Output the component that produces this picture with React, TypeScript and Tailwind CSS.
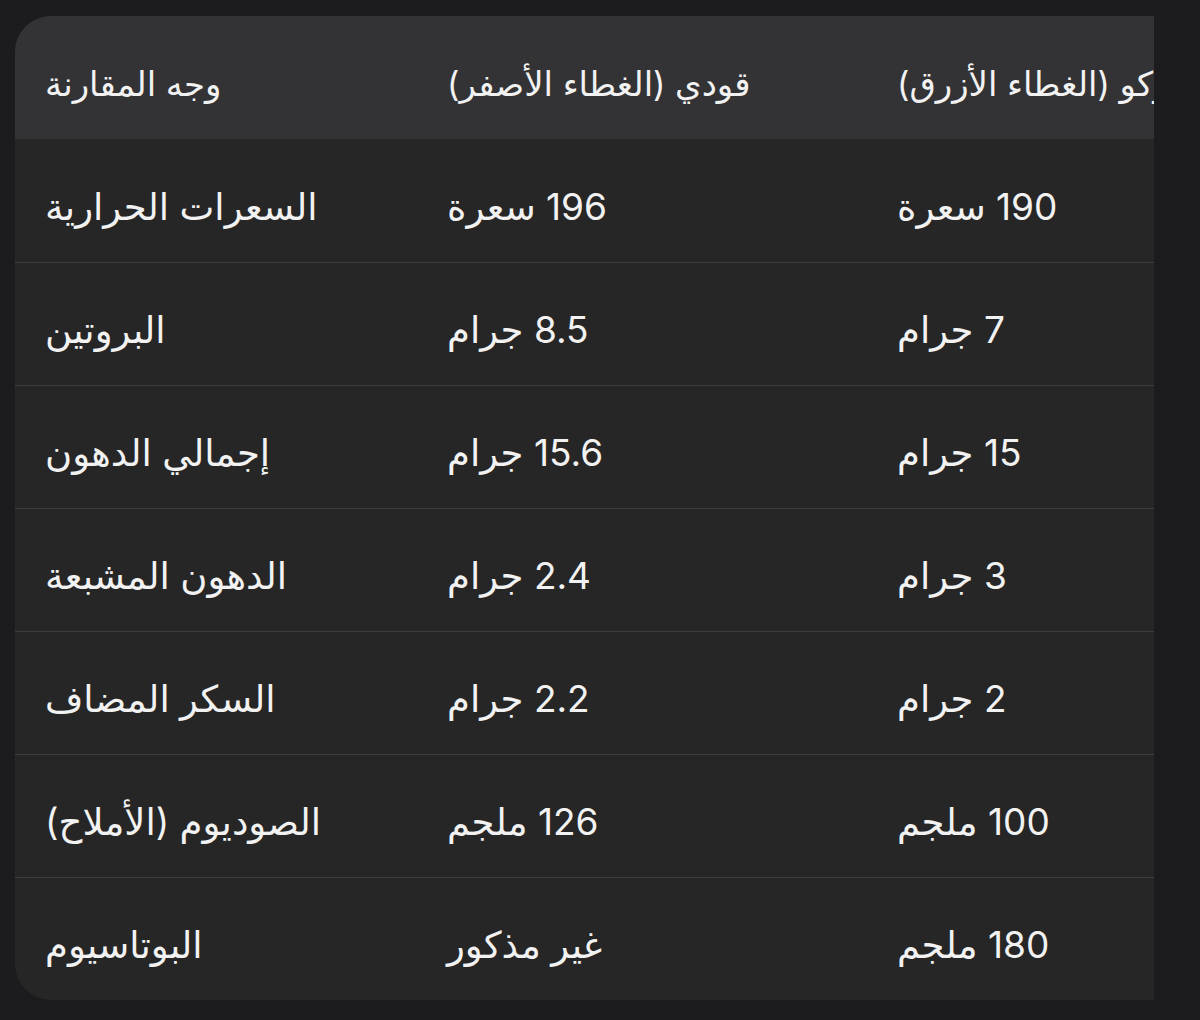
import React from "react";

type Row = [string, string, string];

const header: Row = ["وجه المقارنة", "قودي (الغطاء الأصفر)", "كوكو (الغطاء الأزرق)"];

const rows: Row[] = [
  ["السعرات الحرارية", "196 سعرة", "190 سعرة"],
  ["البروتين", "8.5 جرام", "7 جرام"],
  ["إجمالي الدهون", "15.6 جرام", "15 جرام"],
  ["الدهون المشبعة", "2.4 جرام", "3 جرام"],
  ["السكر المضاف", "2.2 جرام", "2 جرام"],
  ["الصوديوم (الأملاح)", "126 ملجم", "100 ملجم"],
  ["البوتاسيوم", "غير مذكور", "180 ملجم"],
];

const font = { fontFamily: 'Inter, "DejaVu Sans", sans-serif' };

export default function App() {
  return (
    <div className="min-h-[1020px] w-[1200px] bg-[#1c1c1e] pt-4 pl-[15px]" style={font}>
      <div className="w-[1139px] overflow-hidden rounded-l-[36px] bg-[#262626]">
        <table className="w-[1272px] table-fixed border-collapse text-[37px] text-[#f2f2f2]">
          <colgroup>
            <col className="w-[402px]" />
            <col className="w-[450px]" />
            <col className="w-[420px]" />
          </colgroup>
          <thead>
            <tr className="h-[123px] bg-[#333335]">
              {header.map((h) => (
                <th key={h} dir="rtl" className="px-[30px] pt-3 text-left text-[34px] font-normal whitespace-nowrap">
                  {h}
                </th>
              ))}
            </tr>
          </thead>
          <tbody>
            {rows.map((r, i) => (
              <tr key={r[0]} className={i === 0 ? "h-[123px]" : "h-[123px] border-t-[1.5px] border-[#3d3d3f]"}>
                {r.map((c, j) => (
                  <td key={j} dir="rtl" className="px-[30px] pt-3 text-left whitespace-nowrap">
                    {c}
                  </td>
                ))}
              </tr>
            ))}
          </tbody>
        </table>
      </div>
    </div>
  );
}
